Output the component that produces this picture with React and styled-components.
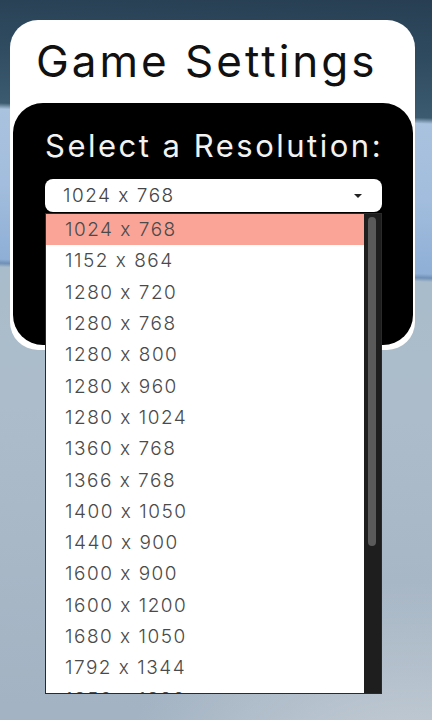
import React from "react";
import styled, { createGlobalStyle } from "styled-components";

const Global = createGlobalStyle`
  html, body {
    margin: 0;
    padding: 0;
    height: 720px;
    overflow: hidden;
  }
  body {
    font-family: "Inter", "Open Sans", sans-serif;
    font-feature-settings: "calt" 0;
    background:
      radial-gradient(ellipse 420px 300px at 95% 110%, rgba(205,212,218,0.9), rgba(205,212,218,0) 70%),
      linear-gradient(182deg,
        #283f53 0px,
        #2f4b60 60px,
        #3c5b70 118px,
        #a9c2de 124px,
        #a2bddd 200px,
        #8fafd6 274px,
        #6f8fb6 278px,
        #a9bccb 282px,
        #adbcca 420px,
        #a3b3c3 720px);
  }
`;

const Page = styled.div`
  padding: 20px 17px 0 10px;
  position: relative;
`;

const Card = styled.div`
  background: #ffffff;
  border-radius: 28px;
  padding: 0 2px 5px 3px;
`;

const Title = styled.h1`
  margin: 0;
  height: 83px;
  box-sizing: border-box;
  padding: 15px 0 0 23px;
  font-family: "Inter", sans-serif;
  font-weight: 400;
  font-size: 44px;
  line-height: 52px;
  letter-spacing: 3px;
  color: #111;
  white-space: nowrap;
`;

const Panel = styled.div`
  background: #000;
  border-radius: 30px;
  height: 242px;
  box-sizing: border-box;
  padding: 24px 31px 0 32px;
`;

const Label = styled.div`
  font-family: "Inter", sans-serif;
  font-weight: 400;
  font-size: 31px;
  line-height: 38px;
  letter-spacing: 2.5px;
  color: #f2f2f2;
  margin-bottom: 14px;
  white-space: nowrap;
`;

const SelectWrap = styled.div`
  position: relative;
`;

const SelectBox = styled.div`
  height: 33px;
  background: #fff;
  border-radius: 8px;
  display: flex;
  align-items: center;
  justify-content: space-between;
  padding: 0 20px 0 18px;
  box-sizing: border-box;
  font-family: "Inter", sans-serif;
  font-weight: 300;
  font-size: 19px;
  letter-spacing: 1.5px;
  color: #444;
`;

const Caret = styled.span`
  width: 0;
  height: 0;
  border-left: 4px solid transparent;
  border-right: 4px solid transparent;
  border-top: 4px solid #222;
`;

const ListBox = styled.div`
  position: absolute;
  top: 34px;
  left: 0;
  width: 337px;
  height: 481px;
  box-sizing: border-box;
  border: 1px solid #2a2a2a;
  background: #fff;
  display: flex;
  overflow: hidden;
  z-index: 5;
`;

const Options = styled.div`
  flex: 1;
  display: flex;
  flex-direction: column;
  overflow: hidden;
`;

const Option = styled.div`
  flex: 0 0 31.3px;
  display: flex;
  align-items: center;
  padding-left: 19px;
  font-family: "Inter", sans-serif;
  font-weight: 300;
  font-size: 19px;
  letter-spacing: 1.5px;
  color: #4a4a4a;
  background: ${(p) => (p.$selected ? "#f9a497" : "transparent")};
`;

const Track = styled.div`
  width: 17px;
  background: #1e1e1e;
  padding: 3px 5px 0 4px;
  box-sizing: border-box;
`;

const Thumb = styled.div`
  height: 329px;
  border-radius: 4px;
  background: #5a5a5a;
`;

const resolutions = [
  "1024 x 768",
  "1152 x 864",
  "1280 x 720",
  "1280 x 768",
  "1280 x 800",
  "1280 x 960",
  "1280 x 1024",
  "1360 x 768",
  "1366 x 768",
  "1400 x 1050",
  "1440 x 900",
  "1600 x 900",
  "1600 x 1200",
  "1680 x 1050",
  "1792 x 1344",
  "1856 x 1392",
  "1920 x 1080",
];

export default function App() {
  return (
    <>
      <Global />
      <Page>
        <Card>
          <Title>Game Settings</Title>
          <Panel>
            <Label>Select a Resolution:</Label>
            <SelectWrap>
              <SelectBox>
                <span>1024 x 768</span>
                <Caret />
              </SelectBox>
              <ListBox>
                <Options>
                  {resolutions.map((r, i) => (
                    <Option key={r} $selected={i === 0}>
                      {r}
                    </Option>
                  ))}
                </Options>
                <Track>
                  <Thumb />
                </Track>
              </ListBox>
            </SelectWrap>
          </Panel>
        </Card>
      </Page>
    </>
  );
}
